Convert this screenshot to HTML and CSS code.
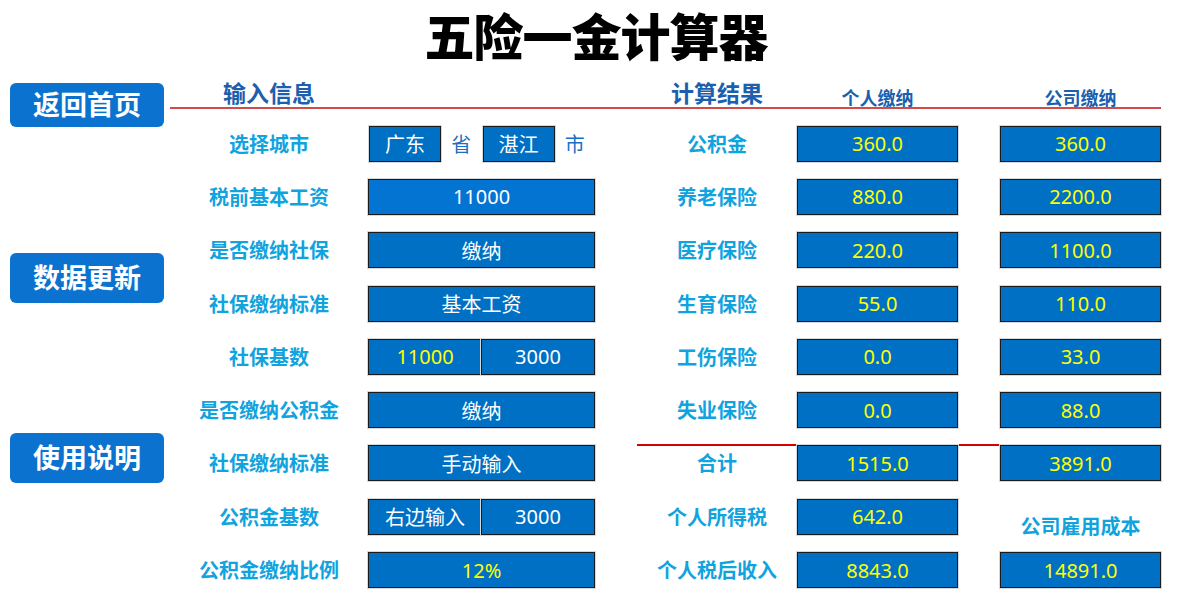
FILE: index.html
```html
<!DOCTYPE html>
<html lang="zh">
<head>
<meta charset="utf-8">
<title>五险一金计算器</title>
<link rel="stylesheet" href="styles.css">
</head>
<body>
<h1 class="title">五险一金计算器</h1>
<div class="main">
  <div class="side">
    <div class="btn btn-home">返回首页</div>
    <div class="btn btn-update">数据更新</div>
    <div class="btn btn-help">使用说明</div>
  </div>
  <div class="content">
    <div class="head">
      <div class="h-big c1">输入信息</div>
      <div class="h-big c4">计算结果</div>
      <div class="h-small c5">个人缴纳</div>
      <div class="h-small c7">公司缴纳</div>
    </div>
    <div class="grid">
      <div class="total-line"></div>

      <div class="label c1 r1">选择城市</div>
      <div class="city c2 r1">
        <div class="box small">广东</div><span class="unit">省</span>
        <div class="box small">湛江</div><span class="unit">市</span>
      </div>
      <div class="label c4 r1">公积金</div>
      <div class="box res c5 r1">360.0</div>
      <div class="box res c7 r1">360.0</div>

      <div class="label c1 r2">税前基本工资</div>
      <div class="box in c2 r2 bright">11000</div>
      <div class="label c4 r2">养老保险</div>
      <div class="box res c5 r2">880.0</div>
      <div class="box res c7 r2">2200.0</div>

      <div class="label c1 r3">是否缴纳社保</div>
      <div class="box in c2 r3">缴纳</div>
      <div class="label c4 r3">医疗保险</div>
      <div class="box res c5 r3">220.0</div>
      <div class="box res c7 r3">1100.0</div>

      <div class="label c1 r4">社保缴纳标准</div>
      <div class="box in c2 r4">基本工资</div>
      <div class="label c4 r4">生育保险</div>
      <div class="box res c5 r4">55.0</div>
      <div class="box res c7 r4">110.0</div>

      <div class="label c1 r5">社保基数</div>
      <div class="split c2 r5">
        <div class="box half yellow">11000</div><div class="box half">3000</div>
      </div>
      <div class="label c4 r5">工伤保险</div>
      <div class="box res c5 r5">0.0</div>
      <div class="box res c7 r5">33.0</div>

      <div class="label c1 r6">是否缴纳公积金</div>
      <div class="box in c2 r6">缴纳</div>
      <div class="label c4 r6">失业保险</div>
      <div class="box res c5 r6">0.0</div>
      <div class="box res c7 r6">88.0</div>

      <div class="label c1 r7">社保缴纳标准</div>
      <div class="box in c2 r7">手动输入</div>
      <div class="label c4 r7">合计</div>
      <div class="box res c5 r7">1515.0</div>
      <div class="box res c7 r7">3891.0</div>

      <div class="label c1 r8">公积金基数</div>
      <div class="split c2 r8">
        <div class="box half">右边输入</div><div class="box half">3000</div>
      </div>
      <div class="label c4 r8">个人所得税</div>
      <div class="box res c5 r8">642.0</div>
      <div class="label low c7 r8">公司雇用成本</div>

      <div class="label c1 r9">公积金缴纳比例</div>
      <div class="box in c2 r9 yellow">12%</div>
      <div class="label c4 r9">个人税后收入</div>
      <div class="box res c5 r9">8843.0</div>
      <div class="box res c7 r9">14891.0</div>
    </div>
  </div>
</div>
</body>
</html>
```

FILE: styles.css
```css
html, body {
  margin: 0;
  padding: 0;
  background: #ffffff;
}
body {
  width: 1200px;
  height: 607px;
  overflow: hidden;
  font-family: "Noto Sans", "Noto Sans CJK SC", sans-serif;
}
.title {
  margin: 0;
  height: 76px;
  line-height: 68px;
  text-align: center;
  font-family: "Noto Sans CJK SC", sans-serif;
  font-weight: 900;
  font-size: 50px;
  color: #000;
  letter-spacing: -1px;
  padding-right: 8px;
  box-sizing: border-box;
}
.main {
  display: flex;
}
.side {
  width: 170px;
  flex: none;
  display: flex;
  flex-direction: column;
  padding-top: 7px;
}
.btn {
  margin-left: 10px;
  width: 154px;
  border-radius: 6px;
  background: #0b72d0;
  color: #fff;
  font-family: "Noto Sans CJK SC", sans-serif;
  font-weight: 700;
  font-size: 27px;
  line-height: 1;
  padding-bottom: 3px;
  box-sizing: border-box;
  display: flex;
  align-items: center;
  justify-content: center;
}
.btn-home { height: 44px; }
.btn-update { height: 50px; margin-top: 126px; }
.btn-help { height: 50px; margin-top: 130px; }

.content {
  width: 991px;
}
.head, .grid {
  display: grid;
  grid-template-columns: 198px 227px 42px 160px 161px 42px 161px;
}
.head {
  height: 31px;
  border-bottom: 2px solid #d24a4a;
  align-items: end;
}
.h-big, .h-small {
  text-align: center;
  font-family: "Noto Sans CJK SC", sans-serif;
  font-weight: 700;
  color: #1c5fae;
}
.h-big { font-size: 23px; line-height: 28px; padding-bottom: 1px; }
.h-small { font-size: 18px; line-height: 22px; margin-bottom: -1px; }

.grid {
  margin-top: 8px;
  grid-template-rows: repeat(9, 53.3px);
  position: relative;
}
.c1 { grid-column: 1; }
.c2 { grid-column: 2; }
.c4 { grid-column: 4; }
.c5 { grid-column: 5; }
.c7 { grid-column: 7; }
.r1 { grid-row: 1; }
.r2 { grid-row: 2; }
.r3 { grid-row: 3; }
.r4 { grid-row: 4; }
.r5 { grid-row: 5; }
.r6 { grid-row: 6; }
.r7 { grid-row: 7; }
.r8 { grid-row: 8; }
.r9 { grid-row: 9; }

.label {
  align-self: center;
  text-align: center;
  font-family: "Noto Sans CJK SC", sans-serif;
  font-weight: 700;
  font-size: 20px;
  color: #10a3de;
  line-height: 28px;
}
.label.low { margin-top: 18px; }

.total-line {
  grid-column: 4 / 8;
  grid-row: 7;
  align-self: start;
  margin-top: 7px;
  height: 2px;
  background: #d80000;
}

.box {
  box-sizing: border-box;
  height: 36px;
  background: #0070c4;
  border: 1px solid #1b1b1b;
  box-shadow: 0 0 0 1px #d8d8d8;
  color: #ffffff;
  font-size: 20px;
  display: flex;
  align-items: center;
  justify-content: center;
  font-family: "Noto Sans", "Noto Sans CJK SC", sans-serif;
  position: relative;
}
.in, .res, .city, .split {
  align-self: center;
}
.res { color: #ffff00; }
.bright { background: #0474d2; }
.yellow { color: #ffff00; }

.city {
  display: flex;
  align-items: center;
}
.box.small {
  width: 73px;
  margin-left: 1px;
}
.unit {
  width: 41px;
  text-align: center;
  color: #1b6fc2;
  font-family: "Noto Sans CJK SC", sans-serif;
  font-size: 20px;
}
.split {
  display: flex;
}
.box.half {
  flex: 1;
}
.box.half + .box.half {
  border-left: 1px solid #1b1b1b;
  margin-left: -1px;
}
```
